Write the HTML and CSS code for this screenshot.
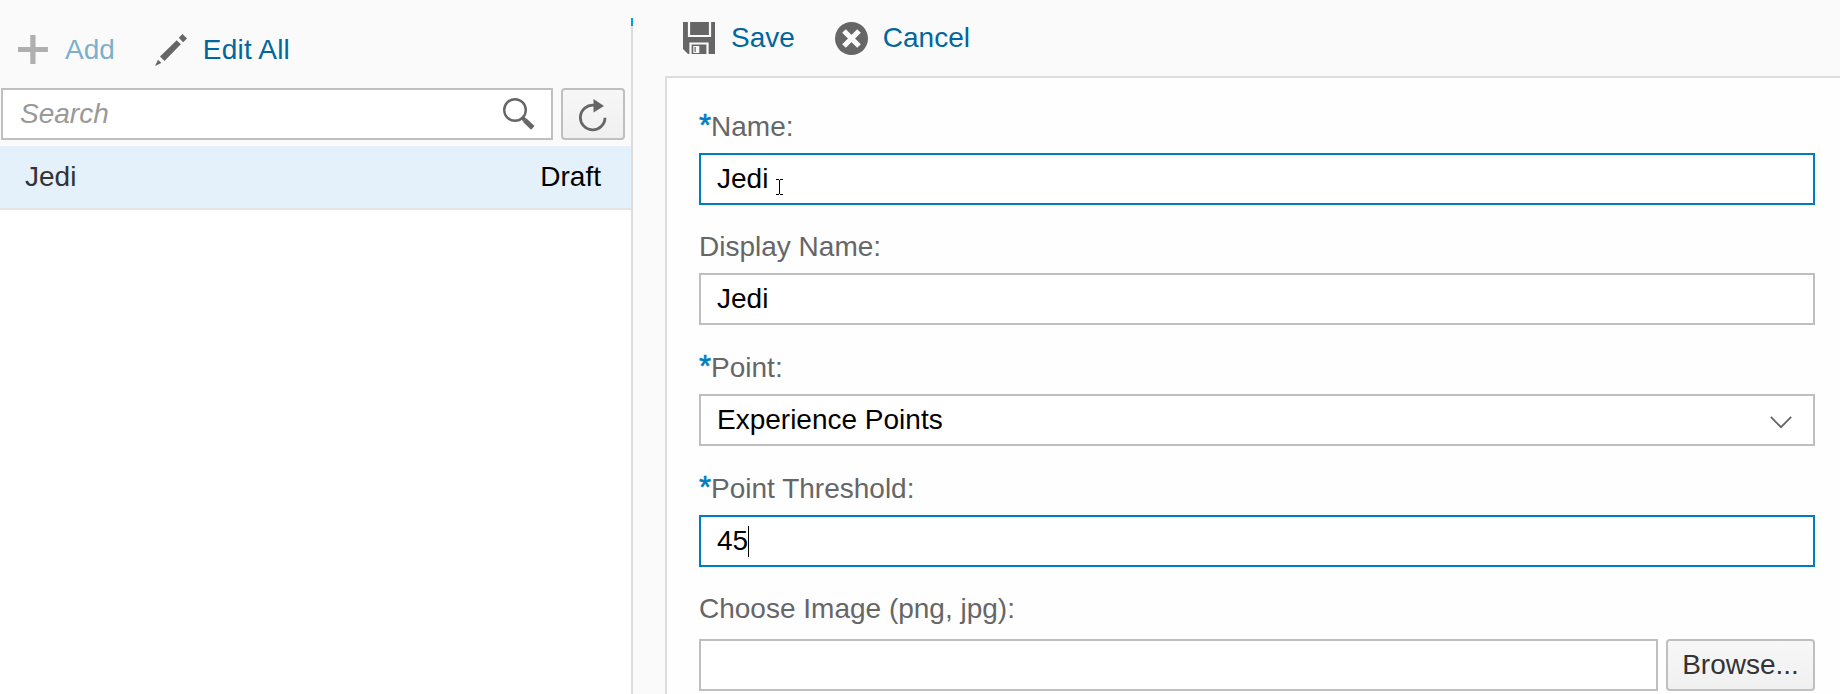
FILE: index.html
```html
<!DOCTYPE html>
<html lang="en">
<head>
<meta charset="utf-8">
<title>Levels</title>
<link rel="stylesheet" href="styles.css">
</head>
<body>
<div class="app">
  <aside class="master">
    <div class="master-bar">
      <span class="action action-disabled">
        <svg class="icon-add" viewBox="0 0 30 29" width="30" height="29"><path d="M12.3 0h5.2v12h12.4v5H17.5v12h-5.2V17H0v-5h12.3z" fill="#666"/></svg>
        <span>Add</span>
      </span>
      <span class="action action-edit">
        <svg viewBox="0 0 32 32" width="32" height="32" fill="#666"><path d="M27.5 0 32 4.4 28.2 8.3 23.8 3.8z"/><path d="M21.7 6.2 25.8 10.3 9.5 27 5 22.6z"/><path d="M3 25.8 6.4 29 0 32z"/></svg>
        <span>Edit All</span>
      </span>
    </div>
    <div class="search-row">
      <div class="search-box">
        <span class="placeholder">Search</span>
        <svg class="icon-search" viewBox="0 0 32 32" width="32" height="32"><circle cx="12" cy="12" r="10.8" fill="none" stroke="#666" stroke-width="2.4"/><path d="M18.6 19l3.4 3.2" stroke="#666" stroke-width="4"/><path d="M21.8 22.3l8 7.6" stroke="#666" stroke-width="5"/></svg>
      </div>
      <div class="btn refresh">
        <svg viewBox="0 0 28 33" width="28" height="33"><path d="M15 6.3A12.3 12.3 0 1 0 26 18.7" fill="none" stroke="#666" stroke-width="2.8"/><path d="M14.5 0v13.5L25 7z" fill="#666"/></svg>
      </div>
    </div>
    <div class="list-item"><span class="item-name">Jedi</span><span class="item-state">Draft</span></div>
    <div class="list-rest"></div>
  </aside>
  <div class="divider"><i class="divider-mark"></i><i class="divider-line"></i></div>
  <main class="detail">
    <div class="detail-bar">
      <span class="action">
        <svg viewBox="0 0 32 32" width="32" height="32"><path d="M0 0h32v32H5L0 27z" fill="#666"/><path d="M6 0v14h21V0M7.5 32V21.5h17V32" fill="none" stroke="#fafafa" stroke-width="2.2"/><path d="M10.3 24h6v7h-6z" fill="#fafafa"/><path d="M11.5 25h1.2v5h-1.2z" fill="#666"/></svg>
        <span>Save</span>
      </span>
      <span class="action action-cancel">
        <svg viewBox="0 0 33 33" width="33" height="33"><circle cx="16.5" cy="16.5" r="16.5" fill="#666"/><path d="M9 9l15 15M24 9L9 24" stroke="#fafafa" stroke-width="5.2"/></svg>
        <span>Cancel</span>
      </span>
    </div>
    <form class="panel">
      <div class="field">
        <div class="label"><b class="req">*</b>Name:</div>
        <div class="input input-active">Jedi
          <svg class="pointer" viewBox="0 0 7 16" width="7" height="16" shape-rendering="crispEdges"><path d="M0 .5h3M4 .5h3M3.5 1v14M0 15.5h3M4 15.5h3" stroke="#000" fill="none"/></svg>
        </div>
      </div>
      <div class="field">
        <div class="label">Display Name:</div>
        <div class="input">Jedi</div>
      </div>
      <div class="field field-loose">
        <div class="label"><b class="req">*</b>Point:</div>
        <div class="input select">Experience Points
          <svg class="chevron" viewBox="0 0 22 13" width="22" height="13"><path d="M.8.8 11 11.2 21.2.8" fill="none" stroke="#666" stroke-width="1.8"/></svg>
        </div>
      </div>
      <div class="field field-loose">
        <div class="label"><b class="req">*</b>Point Threshold:</div>
        <div class="input input-active">45<i class="caret"></i></div>
      </div>
      <div class="field">
        <div class="label">Choose Image (png, jpg):</div>
        <div class="upload"><div class="input"></div><div class="btn browse">Browse...</div></div>
      </div>
    </form>
  </main>
</div>
</body>
</html>
```
FILE: styles.css
```css
* { box-sizing: border-box; }
body {
  margin: 0;
  background: #fafafa;
  font: 28px/32px "Liberation Sans", Arial, sans-serif;
  color: #000;
}
svg { display: block; flex: none; }
.app { display: flex; height: 694px; overflow: hidden; }

.master { display: flex; flex-direction: column; width: 631px; flex: none; }
.master-bar { display: flex; align-items: center; height: 88px; padding: 11px 0 0 18px; flex: none; }
.action { display: flex; align-items: center; gap: 16px; color: #00679e; }
.action-disabled { gap: 17px; opacity: .5; }
.action-edit { margin-left: 40px; letter-spacing: .2px; }

.search-row { display: flex; gap: 8px; height: 58px; padding: 0 6px 0 1px; flex: none; }
.search-box {
  display: flex;
  flex: 1;
  align-items: center;
  justify-content: space-between;
  height: 52px;
  padding: 0 16px 0 17px;
  border: 2px solid #bfbfbf;
  background: #fff;
}
.placeholder { color: #999; font-style: italic; }
.btn {
  display: flex;
  align-items: center;
  justify-content: center;
  height: 52px;
  border: 2px solid #bfbfbf;
  border-radius: 4px;
  background: linear-gradient(#f7f7f7, #f0f0f0);
  color: #333;
}
.refresh { width: 64px; padding-top: 2px; }
.list-item {
  display: flex;
  flex: none;
  align-items: center;
  justify-content: space-between;
  height: 64px;
  padding: 0 30px 0 25px;
  border-bottom: 2px solid #e5e5e5;
  background: #e4f1fa;
}
.item-name { color: #333; }
.list-rest { flex: 1; background: #fff; }

.divider { display: flex; flex-direction: column; width: 2px; padding-top: 18px; flex: none; }
.divider-mark { height: 8px; background: #009de0; }
.divider-line { flex: 1; background: #ddd; }

.detail { display: flex; flex: 1; flex-direction: column; padding-left: 32px; }
.detail-bar { display: flex; align-items: center; height: 76px; padding-left: 18px; flex: none; }
.action-cancel { margin-left: 40px; gap: 15px; }
.panel {
  flex: 1;
  padding: 33px 25px 0 32px;
  border: solid #ddd;
  border-width: 2px 0 0 2px;
  background: #fefefe;
}
.field { margin-bottom: 26px; }
.field-loose { margin-top: 27px; }
.label { height: 32px; margin-bottom: 10px; color: #666; }
.req {
  color: #007cc0;
  font-size: 31px;
  font-weight: normal;
  line-height: 0;
  -webkit-text-stroke: .6px #007cc0;
}
.input {
  display: flex;
  align-items: center;
  height: 52px;
  padding: 0 21px 0 16px;
  border: 2px solid #bfbfbf;
  background: #fff;
}
.input-active { border-color: #007cc0; }
.select { justify-content: space-between; }
.chevron { margin-top: 4px; }
.pointer { margin: 16px 0 0 8px; }
.caret { width: 1px; height: 31px; background: #000; }
.upload { display: flex; gap: 8px; padding-top: 4px; }
.upload .input { flex: 1; }
.browse { width: 149px; }
```
